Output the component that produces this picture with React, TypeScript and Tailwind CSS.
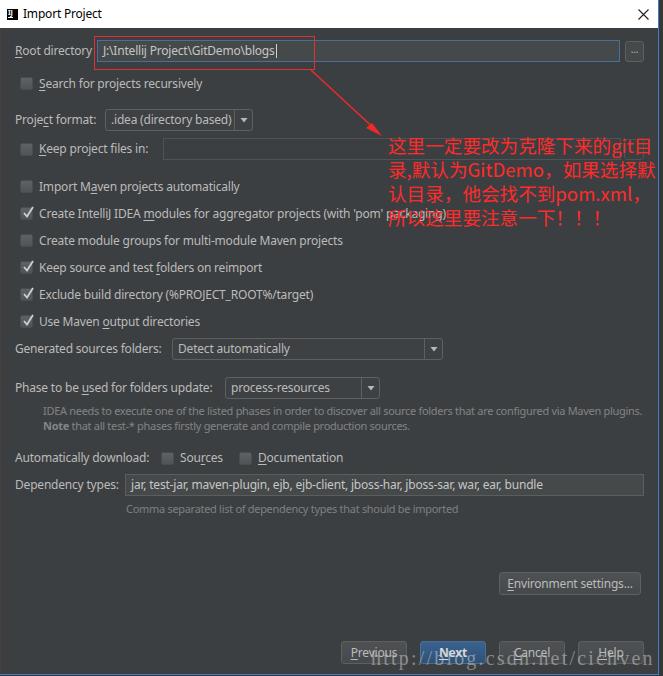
import type { ReactNode } from "react";

function U({ children }: { children: ReactNode }) {
  return <span className="underline underline-offset-[2px]">{children}</span>;
}

function Check({ checked }: { checked?: boolean }) {
  return (
    <span className="relative inline-block h-[13px] w-[13px] shrink-0 rounded-[2px] border border-[#4a4d4f] bg-linear-to-b from-[#5f6264] to-[#515456]">
      {checked && (
        <svg className="absolute -top-[3px] left-[1px]" width="13" height="14" viewBox="0 0 13 14">
          <path d="M2 8 L5 11.5 L11 2" stroke="#cfcfcf" strokeWidth="1.8" fill="none" />
        </svg>
      )}
    </span>
  );
}

function CheckRow({ checked, children }: { checked?: boolean; children: ReactNode }) {
  return (
    <div className="flex h-[27px] items-center pl-[5px]">
      <Check checked={checked} />
      <span className="ml-[6px]">{children}</span>
    </div>
  );
}

function Arrow() {
  return (
    <svg width="8" height="6" viewBox="0 0 8 6">
      <path d="M0.5 1 L7.5 1 L4 5.5 Z" fill="#b8b8b8" />
    </svg>
  );
}

function Combo({ value, className }: { value: string; className: string }) {
  return (
    <div className={`flex h-[22px] items-stretch rounded-[3px] border border-[#5e6060] bg-[#3e4143] ${className}`}>
      <span className="flex flex-1 items-center pl-[5px]">{value}</span>
      <span className="flex w-[18px] items-center justify-center border-l border-[#5e6060]">
        <Arrow />
      </span>
    </div>
  );
}

function Button({ children, primary, className }: { children: ReactNode; primary?: boolean; className: string }) {
  return (
    <div
      className={`flex h-[23px] items-center justify-center rounded-[3px] border ${
        primary
          ? "border-[#4b6e8e] bg-linear-to-b from-[#3a6291] to-[#2f5175] font-bold text-[#d8d8d8]"
          : "border-[#5e6060] bg-linear-to-b from-[#4e5254] to-[#46494b]"
      } ${className}`}
    >
      {children}
    </div>
  );
}

export default function App() {
  return (
    <div className="flex h-[676px] w-[663px] bg-[#35383a] font-['Noto_Sans',sans-serif] text-[12px] tracking-[-0.2px] text-[#bbbbbb]">
      <div className="relative flex h-[675px] w-[659px] flex-col border-r border-b border-[#3f7fbf]">
        <div className="flex h-[28px] items-center bg-white text-black">
          <span className="ml-[7px] flex h-[11px] w-[11px] flex-col items-start bg-black px-[1px] text-[7px] font-bold leading-[7px] text-white">
            IJ
            <span className="mt-[1px] h-[1px] w-[5px] bg-white" />
          </span>
          <span className="ml-[5px] text-[12px]">Import Project</span>
          <svg className="ml-auto mr-[9px]" width="11" height="11" viewBox="0 0 11 11">
            <path d="M0.5 0.5 L10.5 10.5 M10.5 0.5 L0.5 10.5" stroke="#222" strokeWidth="1.1" />
          </svg>
        </div>

        <div className="flex flex-1 flex-col border-l border-[#4a3f3a] bg-[#3c3f41] pl-[14px] pr-[14px] pt-[12px]">
          <div className="flex h-[22px] items-center">
            <span className="w-[82px]">
              <U>R</U>oot directory
            </span>
            <div className="flex h-[22px] flex-1 items-center border border-[#46709a] bg-[#45494a] pl-[5px] text-[#c6c6c6]">
              J:\Intellij Project\GitDemo\blogs
              <span className="ml-[1px] h-[14px] w-[1px] bg-[#d0d0d0]" />
            </div>
            <div className="ml-[5px] flex h-[21px] w-[19px] items-center justify-center rounded-[3px] border border-[#5e6060] bg-[#45494a] pb-[4px] text-[10px]">
              ...
            </div>
          </div>

          <div className="mt-[8px]">
            <CheckRow>
              <U>S</U>earch for projects recursively
            </CheckRow>
          </div>

          <div className="mt-[12px] flex h-[22px] items-center">
            <span className="w-[90px]">
              Proje<U>c</U>t format:
            </span>
            <Combo value=".idea (directory based)" className="w-[148px]" />
          </div>

          <div className="mt-[7px] flex h-[22px] items-center pl-[5px]">
            <Check />
            <span className="ml-[6px] w-[124px]">
              <U>K</U>eep project files in:
            </span>
            <div className="h-[22px] flex-1 border border-[#505354] bg-[#3c3f41]" />
            <div className="ml-[3px] h-[21px] w-[20px] rounded-[3px] border border-[#4f5253]" />
          </div>

          <div className="mt-[13px] flex flex-col">
            <CheckRow>
              Import M<U>a</U>ven projects automatically
            </CheckRow>
            <CheckRow checked>
              Create IntelliJ IDEA <U>m</U>odules for aggregator projects (with 'pom' packaging)
            </CheckRow>
            <CheckRow>
              Create module <U>g</U>roups for multi-module Maven projects
            </CheckRow>
            <CheckRow checked>
              Keep source and test <U>f</U>olders on reimport
            </CheckRow>
            <CheckRow checked>Exclude build directory (%PROJECT_ROOT%/target)</CheckRow>
            <CheckRow checked>
              Use Maven <U>o</U>utput directories
            </CheckRow>
          </div>

          <div className="mt-[3px] flex h-[22px] items-center">
            <span className="w-[157px]">Generated sources folders:</span>
            <Combo value="Detect automatically" className="w-[271px]" />
          </div>

          <div className="mt-[17px] flex h-[22px] items-center">
            <span className="w-[210px]">
              Phase to be <U>u</U>sed for folders update:
            </span>
            <Combo value="process-resources" className="w-[155px]" />
          </div>

          <div className="mt-[4px] pl-[28px] text-[11px] leading-[15px] tracking-[-0.3px] text-[#828486]">
            <div>IDEA needs to execute one of the listed phases in order to discover all source folders that are configured via Maven plugins.</div>
            <div>
              <span className="font-bold">Note</span> that all test-* phases firstly generate and compile production sources.
            </div>
          </div>

          <div className="mt-[14px] flex h-[22px] items-center">
            <span className="w-[146px]">Automatically download:</span>
            <Check />
            <span className="ml-[6px] w-[59px]">
              Sou<U>r</U>ces
            </span>
            <Check />
            <span className="ml-[6px]">
              <U>D</U>ocumentation
            </span>
          </div>

          <div className="mt-[5px] flex h-[22px] items-center">
            <span className="w-[110px]">Dependency types:</span>
            <div className="flex h-[22px] flex-1 items-center border border-[#5b5e60] bg-[#45494a] pl-[5px] text-[#c6c6c6]">
              jar, test-jar, maven-plugin, ejb, ejb-client, jboss-har, jboss-sar, war, ear, bundle
            </div>
          </div>

          <div className="mt-[5px] pl-[111px] text-[11px] leading-[15px] tracking-[-0.3px] text-[#7d8082]">
            Comma separated list of dependency types that should be imported
          </div>

          <div className="mt-[56px] flex justify-end pr-[3px]">
            <Button className="w-[142px]">
              <span>
                <U>E</U>nvironment settings...
              </span>
            </Button>
          </div>

          <div className="mt-[46px] flex justify-end gap-[13px]">
            <Button className="w-[66px]">
              <span>
                <U>P</U>revious
              </span>
            </Button>
            <Button primary className="w-[66px]">
              <span>
                <U>N</U>ext
              </span>
            </Button>
            <Button className="w-[66px]">
              <span>
                <U>C</U>ancel
              </span>
            </Button>
            <Button className="w-[66px]">
              <span>
                <U>H</U>elp
              </span>
            </Button>
          </div>
        </div>

        <div className="pointer-events-none absolute left-[94px] top-[36px] h-[34px] w-[221px] border border-[#e53030]" />
        <svg className="pointer-events-none absolute left-[300px] top-[60px]" width="90" height="80" viewBox="0 0 90 80">
          <path d="M11 10 L78 72" stroke="#ee2a2a" strokeWidth="1.5" />
          <path d="M82 76 L66 68 L72 63 Z" fill="#ee2a2a" />
        </svg>
        <div className="pointer-events-none absolute left-[388px] top-[133px] whitespace-nowrap font-['Noto_Sans_CJK_SC',sans-serif] text-[18.6px] leading-[24px] tracking-[0px] text-[#ff2b2b]">
          这里一定要改为克隆下来的git目
          <br />
          录,默认为GitDemo，如果选择默
          <br />
          认目录，他会找不到pom.xml，
          <br />
          所以这里要注意一下！！！
        </div>
        <div className="pointer-events-none absolute left-[371px] top-[643px] whitespace-nowrap font-['Liberation_Serif',serif] text-[20px] tracking-[2.2px] text-[#c8c8c8]/55">
          http://blog.csdn.net/cichven
        </div>
      </div>
    </div>
  );
}
